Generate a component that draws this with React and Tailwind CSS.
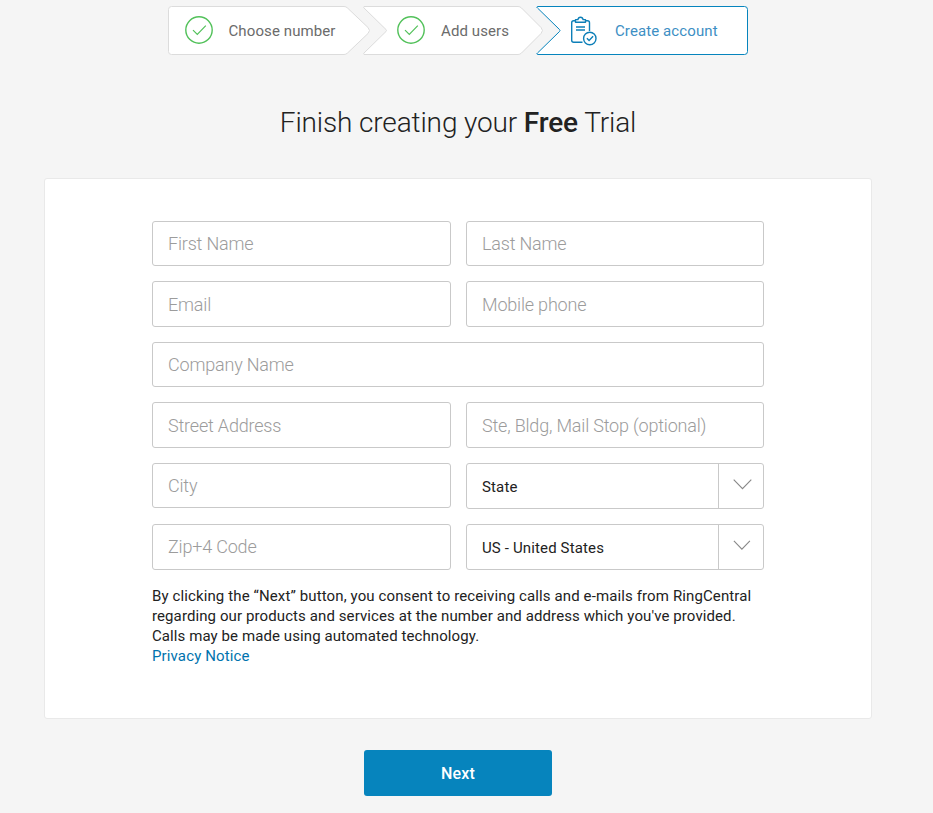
import React from "react";

function CheckCircle() {
  return (
    <svg width="28" height="28" viewBox="0 0 28 28" fill="none" stroke="#52c15a" className="shrink-0">
      <circle cx="14" cy="14" r="13.2" strokeWidth="1.4" />
      <path d="M8 14.2l4.3 4.3 8.5-8.8" strokeWidth="1.2" />
    </svg>
  );
}

function ClipboardCheck() {
  return (
    <svg width="27" height="30" viewBox="0 0 27 30" fill="none" stroke="#0d7fb8" strokeWidth="1.4" className="shrink-0">
      <path d="M5 4.7H3.7Q1.7 4.7 1.7 6.7V24.3Q1.7 26.3 3.7 26.3H12.500M15 4.7H17.500Q19.500 4.7 19.500 6.7V15" />
      <path d="M5.500 6.3V3.6H7.900Q8.300 1.2 10.500 1.2T13.100 3.6H15.500V6.3Z" strokeLinejoin="round" />
      <path d="M6 11H15M6 14H15" />
      <circle cx="19.8" cy="22.5" r="6.2" fill="#fff" />
      <path d="M16.9 22.3l2.2 2.3 4-4.3" />
    </svg>
  );
}

function Step({ className, width, path, stroke, children }) {
  return (
    <li className={`relative flex h-[49px] items-center ${className}`}>
      <svg width={width} height="49" viewBox={`0 0 ${width} 49`} className="absolute inset-0" fill="#fff" stroke={stroke}>
        <path d={path} />
      </svg>
      {children}
    </li>
  );
}

function Field({ label, className = "" }) {
  return (
    <input
      type="text"
      placeholder={label}
      className={`min-w-0 rounded-[3px] border border-[#c9c9c9] bg-white px-[15px] text-[18px] font-light tracking-[-0.19px] text-[#222] outline-none placeholder:text-[#9c9c9c] placeholder:opacity-100 ${className}`}
    />
  );
}

function SelectField({ value, chevron, className = "" }) {
  return (
    <button
      type="button"
      className={`flex h-[46px] items-stretch rounded-[3px] border border-[#c9c9c9] bg-white text-left text-[15px] tracking-[0.14px] text-[#222] ${className}`}
    >
      <span className="flex-1 pt-[2px] pl-[15px] leading-[43px]">{value}</span>
      <span className="flex w-[45px] justify-center border-l border-[#c9c9c9] pt-[15px] pl-[3px]">
        <svg width="19" height="11" viewBox="0 0 19 11" fill="none" stroke="#888" strokeWidth="1.1">
          <path d={chevron} />
        </svg>
      </span>
    </button>
  );
}

export default function App() {
  return (
    <div className="h-[813px] w-[933px] overflow-hidden bg-[#f5f5f5] font-['Roboto','Liberation_Sans',sans-serif] text-[#222]">
      <main className="ml-[44px] flex w-[828px] flex-col items-center pt-[6px]">
        <ol className="flex w-[580px] text-[15px] text-[#6b6b6b]">
          <Step className="w-[202px]" width={202} stroke="#dcdcdc" path="M3.5 .5H176Q178 .5 179.5 2L200 21.5Q203 24.5 200 27.5L179.5 47Q178 48.5 176 48.5H3.5Q.5 48.5 .5 45.5V3.5Q.5 .5 3.5 .5Z">
            <span className="relative flex items-center gap-[16px] pl-[16.5px]">
              <span className="-mt-[2px]"><CheckCircle /></span>
              <span className="pt-[1px] tracking-[0.1px]">Choose number</span>
            </span>
          </Step>
          <Step className="-ml-[7px] w-[180px]" width={180} stroke="#dcdcdc" path="M1 .5H155Q157 .5 158.500 2L178 21.500Q181 24.500 178 27.500L158.500 47Q157 48.500 155 48.500H1Q0 48 1 47L23 25.500Q24 24.500 23 23.500L1 2Q0 1 1 .5Z">
            <span className="relative flex items-center gap-[16px] pl-[34px]">
              <span className="-mt-[2px]"><CheckCircle /></span>
              <span className="pt-[1px] tracking-[0.1px]">Add users</span>
            </span>
          </Step>
          <Step className="-ml-[7px] w-[212px] text-[#3d8fc4]" width={212} stroke="#0684bd" path="M1.500 .5H208.500Q211.500 .5 211.500 3.500V45.500Q211.500 48.500 208.500 48.500H1.500Q0 48 1.500 47L23.500 25.500Q24.500 24.500 23.500 23.500L1.500 2Q0 1 1.500 .5Z">
            <span className="relative flex items-center gap-[18px] pl-[34px]">
              <ClipboardCheck />
              <span className="pt-[2px] tracking-[0.1px]">Create account</span>
            </span>
          </Step>
        </ol>

        <h1 className="mt-[48px] text-[28px] leading-[40px] font-light tracking-[-0.13px]">
          Finish creating your <span className="font-medium">Free</span> Trial
        </h1>

        <section className="mt-[35px] h-[541px] w-[828px] rounded-[3px] border border-[#e9e9e9] bg-white px-[107px] pt-[42px]">
          <form className="grid grid-cols-[299px_298px] gap-x-[15px]">
            <Field label="First Name" className="h-[45px]" />
            <Field label="Last Name" className="h-[45px]" />
            <Field label="Email" className="mt-[15px] h-[46px]" />
            <Field label="Mobile phone" className="mt-[15px] h-[46px]" />
            <Field label="Company Name" className="col-span-2 mt-[15px] h-[45px]" />
            <Field label="Street Address" className="mt-[15px] h-[46px]" />
            <Field label="Ste, Bldg, Mail Stop (optional)" className="mt-[15px] h-[46px]" />
            <Field label="City" className="mt-[15px] h-[45px]" />
            <SelectField value="State" chevron="M0.7 0.7l8.8 9 8.8-9" className="mt-[15px]" />
            <Field label="Zip+4 Code" className="mt-[15px] h-[46px] pb-[2px]" />
            <SelectField value="US - United States" chevron="M0.9 0.900l8 8.300 8-8.300" className="mt-[15px]" />
          </form>
          <p className="mt-[16px] text-[15px] leading-[20px] whitespace-nowrap">
            <span className="tracking-[0.117px]">By clicking the “Next” button, you consent to receiving calls and e-mails from RingCentral</span>
            <br />
            <span className="tracking-[0.1px]">regarding our products and services at the number and address which you've provided.</span>
            <br />
            <span className="tracking-[0.09px]">Calls may be made using automated technology.</span>
            <br />
            <a href="#privacy" className="tracking-[0.13px] text-[#0073ae]">Privacy Notice</a>
          </p>
        </section>

        <button type="button" className="mt-[31px] h-[46px] w-[188px] rounded-[3px] bg-[#0684bd] pt-[2px] text-[16px] font-medium tracking-[0.15px] text-white">
          Next
        </button>
      </main>
    </div>
  );
}
